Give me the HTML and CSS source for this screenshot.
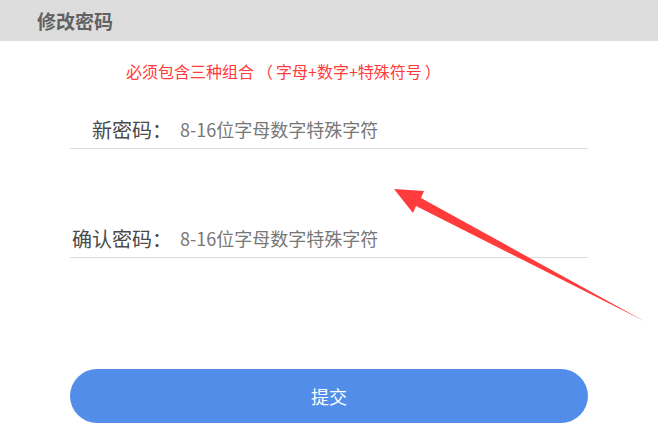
FILE: index.html
```html
<!doctype html>
<html>
<head>
<meta charset="utf-8">
<title>修改密码</title>
	<link rel="stylesheet" href="styles.css">
</head>
<body>

	<!-- header -->
	<div class="header">修改密码</div>

	<p class="notice">必须包含三种组合<span class="paren">（</span>字母+数字+特殊符号<span class="paren">）</span></p>

	<!-- ------------------------------------------------------------------->
	<form class="pwd-form" onsubmit="return false">
		<div class="row row1">
			<label for="newPwd">新密码：</label>
			<input type="password" id="newPwd" name="newPwd" placeholder="8-16位字母数字特殊字符">
		</div>
		<div class="row row2">
			<label for="confirmPwd">确认密码：</label>
			<input type="password" id="confirmPwd" name="confirmPwd" placeholder="8-16位字母数字特殊字符">
		</div>
		<button type="submit" class="submit-btn">提交</button>
	</form>

	<!-- annotation arrow over the page -->
	<svg class="arrow" width="658" height="448" viewBox="0 0 658 448">
		<polygon points="394,189 424,191 421,198 644,321 416,206 413,213" fill="#ff3b3b"/>
	</svg>

</body>
</html>
```

FILE: styles.css
```css
/*Page*/
body{
	margin: 0;
	background: #fff;
	font-family: "Noto Sans CJK SC", "Microsoft YaHei", sans-serif;
	position: relative;
	height: 448px;
	overflow: hidden;
}

/*Header*/
.header{
	height: 41px;
	line-height: 41px;
	background: #dddddd;
	padding-left: 37px;
	font-size: 19px;
	font-weight: bold;
	color: #626262;
}

.notice{
	margin: 20px 0 0 126px;
	font-size: 16px;
	line-height: 20px;
	color: #ff3b3b;
}
.notice .paren{
	margin: 0 3px;
}

/*Form*/
.pwd-form{
	margin-left: 70px;
	width: 518px;
}

.row{
	display: flex;
	align-items: center;
	height: 38px;
	border-bottom: 1px solid #dcdcdc;
}
.row1{
	margin-top: 29px;
}
.row2{
	margin-top: 70px;
}

.row label{
	width: 102px;
	text-align: right;
	font-size: 20px;
	color: #4a4a4a;
}

.row input{
	flex: 1;
	border: 0;
	outline: none;
	margin-left: 6px;
	font-family: inherit;
	font-size: 18px;
	color: #333;
	background: transparent;
}
.row input::placeholder{
	color: #777;
}

/*Button*/
.submit-btn{
	display: block;
	margin-top: 111px;
	width: 518px;
	height: 54px;
	border: 0;
	border-radius: 27px;
	background: #528ee9;
	color: #fff;
	font-family: inherit;
	font-size: 18px;
}

/*Arrow*/
.arrow{
	position: absolute;
	left: 0;
	top: 0;
	pointer-events: none;
}
```
